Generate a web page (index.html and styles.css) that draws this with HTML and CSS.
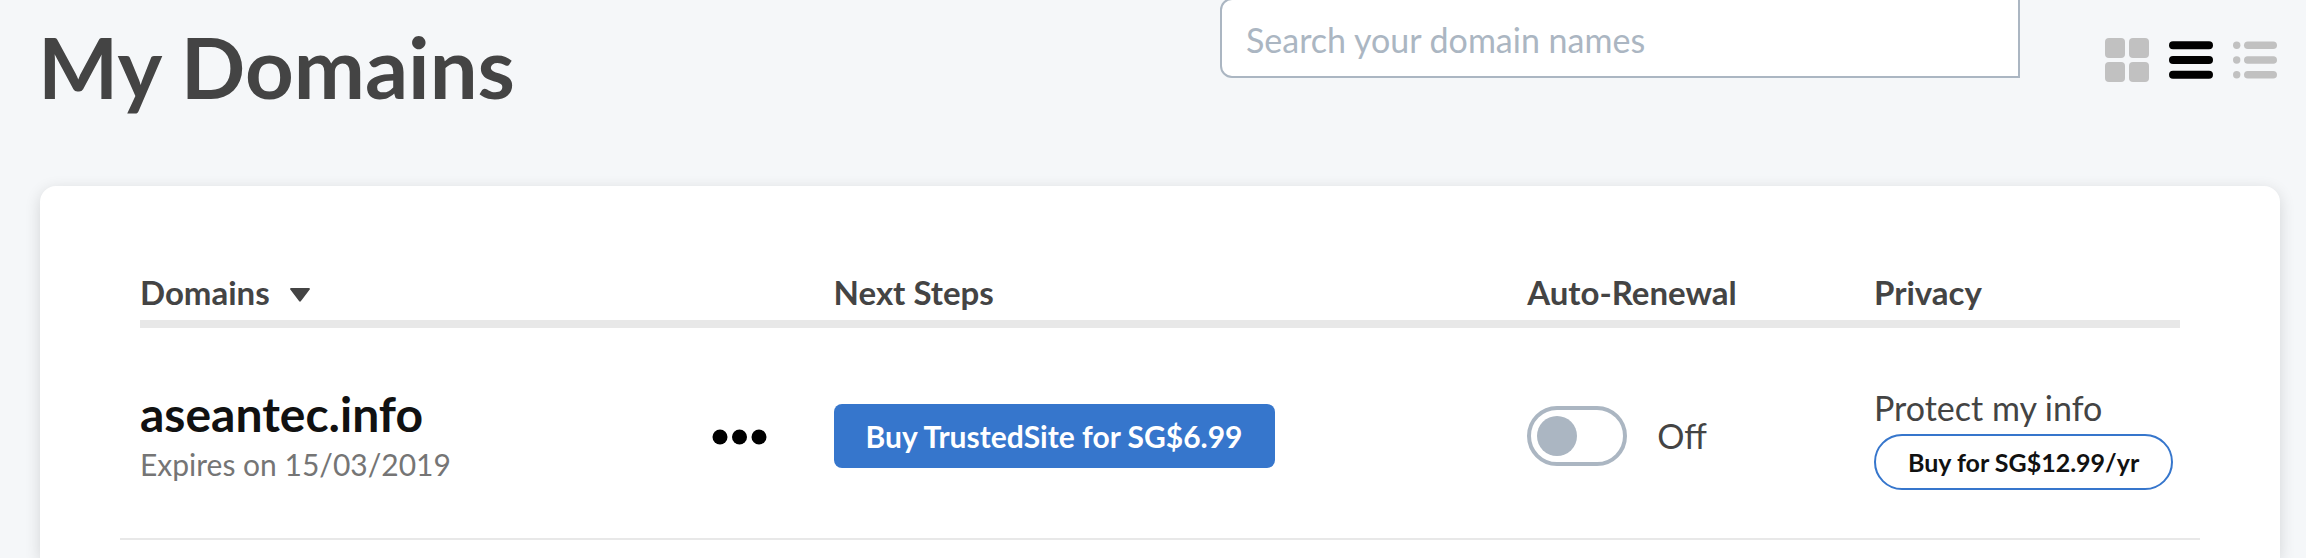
FILE: index.html
```html
<!DOCTYPE html>
<html lang="en">
<head>
<meta charset="UTF-8" />
<meta name="viewport" content="width=device-width, initial-scale=1" />
<title>My Domains</title>
<link rel="stylesheet" href="styles.css">
</head>
<body>
  <header class="page-header">
    <h1 class="page-title">My Domains</h1>

    <input class="search" type="search" placeholder="Search your domain names" aria-label="Search your domain names">

    <!-- View switcher: grid, list, compact list -->
    <div class="views">
      <button class="view" aria-label="Grid view">
        <svg viewBox="0 0 44 44">
          <rect x="0" y="0" width="20" height="20" rx="4" />
          <rect x="24" y="0" width="20" height="20" rx="4" />
          <rect x="0" y="24" width="20" height="20" rx="4" />
          <rect x="24" y="24" width="20" height="20" rx="4" />
        </svg>
      </button>
      <button class="view active" aria-label="List view">
        <svg viewBox="0 0 44 44">
          <rect x="0" y="3.3" width="44" height="8" rx="4" />
          <rect x="0" y="18" width="44" height="8" rx="4" />
          <rect x="0" y="32.7" width="44" height="8" rx="4" />
        </svg>
      </button>
      <button class="view" aria-label="Compact view">
        <svg viewBox="0 0 44 44">
          <circle cx="3.7" cy="7.3" r="3.7" />
          <circle cx="3.7" cy="22" r="3.7" />
          <circle cx="3.7" cy="36.7" r="3.7" />
          <rect x="11" y="3.5" width="33" height="7.6" rx="3.8" />
          <rect x="11" y="18.2" width="33" height="7.6" rx="3.8" />
          <rect x="11" y="32.9" width="33" height="7.6" rx="3.8" />
        </svg>
      </button>
    </div>
  </header>

  <main class="card">
    <table class="domains">
      <thead>
        <tr>
          <th class="col-wide">
            <button class="sort">
              Domains
              <svg class="caret" viewBox="0 0 20 14"><path d="M1 0h18q1.500 .5 .5 1.800L10.800 13.300q-.8 .9-1.600 0L.5 1.800Q-.5 .5 1 0z" /></svg>
            </button>
          </th>
          <th class="col-wide">Next Steps</th>
          <th class="col-renewal">Auto-Renewal</th>
          <th>Privacy</th>
        </tr>
      </thead>
      <tbody>
        <tr>
          <td>
            <div class="domain">
              <div class="domain-info">
                <a class="domain-name" href="#">aseantec.info</a>
                <div class="expires">Expires on 15/03/2019</div>
              </div>
              <button class="more" aria-label="More options">
                <svg viewBox="0 0 56 16">
                  <circle cx="8" cy="9" r="7.500" />
                  <circle cx="27.500" cy="9" r="7.500" />
                  <circle cx="47" cy="9" r="7.500" />
                </svg>
              </button>
            </div>
          </td>
          <td><button class="btn-buy">Buy TrustedSite for SG$6.99</button></td>
          <td>
            <label class="renewal">
              <input class="toggle" type="checkbox">
              Off
            </label>
          </td>
          <td>
            <div class="privacy">
              <span>Protect my info</span>
              <button class="btn-pill">Buy for SG$12.99/yr</button>
            </div>
          </td>
        </tr>
      </tbody>
    </table>
  </main>
</body>
</html>
```
FILE: styles.css
```css
* {
  box-sizing: border-box;
}

body {
  margin: 0;
  height: 100vh;
  overflow: hidden;
  display: flex;
  flex-direction: column;
  background-color: #f5f7f9;
  color: #444;
  font-family: Lato, "Liberation Sans", sans-serif;
  font-size: 34px;
  line-height: 40px;
}

button,
input {
  font-family: inherit;
}

button {
  border: none;
  background: none;
  padding: 0;
  cursor: pointer;
  white-space: nowrap;
}

/* Header with title, search and view switcher */
.page-header {
  display: flex;
  align-items: flex-start;
  height: 186px;
  padding: 0 29px 0 38px;
}

.page-title {
  margin: 14px auto 0 0;
  font-size: 85px;
  line-height: 104px;
  font-weight: 700;
  white-space: nowrap;
}

.search {
  flex: 0 1 800px;
  min-width: 0;
  height: 80px;
  margin: -2px 85px 0 40px;
  padding: 2px 24px 0;
  border: 2px solid #abb6c2;
  border-radius: 12px 0 0 12px;
  background-color: #fff;
  font-size: 34px;
  appearance: none;
}

.search::placeholder {
  color: #abb6c2;
}

.views {
  display: flex;
  gap: 20px;
  margin-top: 38px;
}

.view {
  width: 44px;
  height: 44px;
  fill: #c1c1c1;
}

.view.active {
  fill: #000;
}

svg {
  display: block;
}

/* White panel that holds the list */
.card {
  flex: 1;
  margin: 0 26px 0 40px;
  padding: 80px 100px 0;
  border-radius: 16px 16px 0 0;
  background-color: #fff;
  box-shadow: 0 4px 16px rgba(0, 0, 0, 0.14);
}

.domains {
  width: 100%;
  table-layout: fixed;
  border-collapse: separate;
  border-spacing: 0;
}

.col-wide {
  width: 34%;
}

.col-renewal {
  width: 17%;
}

th {
  padding: 6px 0 8px;
  border-bottom: 8px solid #e8e8e8;
  font-size: 33px;
  font-weight: 700;
  text-align: left;
}

td {
  height: 212px;
  padding: 4px 0 0;
  vertical-align: middle;
}

tbody tr {
  position: relative;
}

/* Row divider, a bit wider than the header rule */
td:first-child::after {
  content: "";
  position: absolute;
  left: -20px;
  right: -20px;
  bottom: 0;
  height: 2px;
  background-color: #e8e8e8;
}

.sort {
  display: flex;
  align-items: center;
  gap: 20px;
  color: inherit;
  font-size: 33px;
  line-height: 40px;
  font-weight: 700;
}

.caret {
  width: 20px;
  height: 14px;
  margin-top: 6px;
  fill: #444;
}

.domain {
  display: flex;
  align-items: center;
  justify-content: space-between;
  padding-right: 66px;
}

.domain-info {
  padding-bottom: 4px;
}

.domain-name {
  display: block;
  color: #111;
  font-size: 48px;
  line-height: 60px;
  font-weight: 700;
  text-decoration: none;
}

.expires {
  color: #757575;
  font-size: 30px;
}

.more {
  width: 56px;
  height: 16px;
}

.more svg {
  overflow: visible;
}

.btn-buy {
  display: block;
  height: 64px;
  padding: 0 32px;
  border-radius: 8px;
  background-color: #3676cc;
  color: #fff;
  font-size: 30px;
  font-weight: 700;
}

/* Auto-renewal switch */
.renewal {
  display: flex;
  align-items: center;
  gap: 30px;
}

.toggle {
  display: flex;
  align-items: center;
  width: 100px;
  height: 60px;
  margin: 0;
  padding: 0 6px;
  border: 4px solid #abb6c2;
  border-radius: 30px;
  appearance: none;
  cursor: pointer;
}

.toggle::before {
  content: "";
  width: 40px;
  height: 40px;
  border-radius: 50%;
  background-color: #abb6c2;
}

.toggle:checked {
  justify-content: flex-end;
}

.privacy {
  display: flex;
  flex-direction: column;
  align-items: flex-start;
  gap: 6px;
  padding-top: 6px;
}

.btn-pill {
  height: 56px;
  padding: 0 32px;
  border: 2px solid #3676cc;
  border-radius: 28px;
  color: #111;
  font-size: 25px;
  font-weight: 700;
}
```
